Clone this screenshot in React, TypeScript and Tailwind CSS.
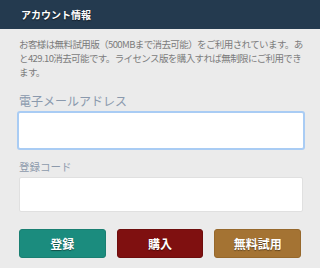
const FONT = "font-['Noto_Sans_CJK_JP','Noto_Sans',sans-serif]";

function ActionButton({ label, className }: { label: string; className: string }) {
  return (
    <button
      type="button"
      className={`h-[29px] rounded-[3px] border text-[12px] font-bold text-white [text-shadow:0_1px_1px_rgba(0,0,0,0.45)] ${className}`}
    >
      {label}
    </button>
  );
}

export default function App() {
  return (
    <div className={`w-[320px] h-[268px] bg-[#ebebeb] ${FONT}`}>
      <header className="h-[29px] bg-[#243a4f] flex items-center pl-[21px]">
        <h1 className="text-[10px] font-bold text-white [text-shadow:0_1px_1px_rgba(0,0,0,0.6)]">
          アカウント情報
        </h1>
      </header>

      <div className="px-[18px] pt-[8px]">
        <p className="text-[9.5px] leading-[14px] tracking-[-0.6px] text-[#7b7b7b] pl-[1px] whitespace-nowrap">
          お客様は無料試用版（500MBまで消去可能）をご利用されています。あ
          <br />
          と429.10消去可能です。ライセンス版を購入すれば無制限にご利用でき
          <br />
          ます。
        </p>

        <label className="block mt-[14px] text-[12px] leading-[16px] text-[#8a99ad] px-[1px]">
          電子メールアドレス
        </label>
        <input
          type="text"
          autoFocus
          className="mt-[3px] block w-[286px] h-[37px] bg-white border border-[#a9ccf4] rounded-[2px] outline-none ring-1 ring-[#a9ccf4]"
        />

        <label className="block mt-[11px] text-[10.5px] leading-[14px] text-[#8d9aab] px-[1px]">
          登録コード
        </label>
        <input
          type="text"
          className="mt-[3px] block ml-[1px] w-[284px] h-[35px] bg-white border border-[#e0e0e0] rounded-[2px] outline-none"
        />

        <div className="mt-[17px] px-[1px] grid grid-cols-3 gap-[11px]">
          <ActionButton label="登録" className="bg-[#1b8c7e] border-[#1a7f72]" />
          <ActionButton label="購入" className="bg-[#7f1010] border-[#6e0d0d]" />
          <ActionButton label="無料試用" className="bg-[#a47333] border-[#96682c]" />
        </div>
      </div>
    </div>
  );
}
